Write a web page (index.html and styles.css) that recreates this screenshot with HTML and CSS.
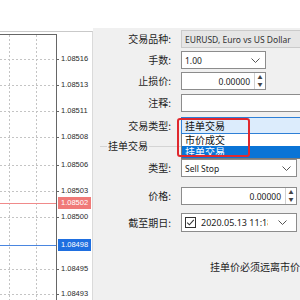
FILE: index.html
```html
<!DOCTYPE html>
<html lang="zh">

<head>
    <meta charset="UTF-8">
    <title>挂单交易</title>
    <link rel="stylesheet" href="styles.css">
</head>

<body>

    <div class="screen">
        <div class="top"></div>
        <div class="main">

            <div class="chart">
                <svg width="92" height="268" viewBox="0 0 92 268">
                    <g stroke="#c4c4c4" stroke-dasharray="2 2" stroke-width="1">
                        <line x1="9.5" y1="3" x2="9.5" y2="268" />
                        <line x1="36.5" y1="3" x2="36.5" y2="268" />
                        <line x1="0" y1="27.5" x2="56" y2="27.5" />
                        <line x1="0" y1="53.5" x2="56" y2="53.5" />
                        <line x1="0" y1="79.5" x2="56" y2="79.5" />
                        <line x1="0" y1="105.5" x2="56" y2="105.5" />
                        <line x1="0" y1="133.5" x2="56" y2="133.5" />
                        <line x1="0" y1="159.5" x2="56" y2="159.5" />
                        <line x1="0" y1="185.5" x2="56" y2="185.5" />
                        <line x1="0" y1="237.5" x2="56" y2="237.5" />
                        <line x1="0" y1="262.5" x2="56" y2="262.5" />
                    </g>
                    <line x1="0" y1="2.5" x2="57" y2="2.5" stroke="#666" />
                    <line x1="56.5" y1="2" x2="56.5" y2="268" stroke="#666" />
                    <line x1="0" y1="171.5" x2="56" y2="171.5" stroke="#f08a8a" />
                    <line x1="0" y1="213.5" x2="56" y2="213.5" stroke="#4a86e0" />
                    <g class="ticks" stroke="#666">
                        <line x1="57" y1="27.5" x2="59" y2="27.5" />
                        <line x1="57" y1="53.5" x2="59" y2="53.5" />
                        <line x1="57" y1="79.5" x2="59" y2="79.5" />
                        <line x1="57" y1="105.5" x2="59" y2="105.5" />
                        <line x1="57" y1="133.5" x2="59" y2="133.5" />
                        <line x1="57" y1="159.5" x2="59" y2="159.5" />
                        <line x1="57" y1="185.5" x2="59" y2="185.5" />
                        <line x1="57" y1="237.5" x2="59" y2="237.5" />
                        <line x1="57" y1="262.5" x2="59" y2="262.5" />
                    </g>
                    <g class="price">
                        <text x="61" y="27">1.08516</text>
                        <text x="61" y="53">1.08513</text>
                        <text x="61" y="79">1.08511</text>
                        <text x="61" y="105">1.08508</text>
                        <text x="61" y="133">1.08506</text>
                        <text x="61" y="159">1.08503</text>
                        <text x="61" y="185">1.08500</text>
                        <text x="61" y="237">1.08495</text>
                        <text x="61" y="262">1.08493</text>
                    </g>
                    <rect x="58" y="165" width="33" height="12" fill="#f07a78" />
                    <text class="price tag" x="61" y="171">1.08502</text>
                    <rect x="58" y="207" width="33" height="12" fill="#1f6fe0" />
                    <text class="price tag" x="61" y="213">1.08498</text>
                </svg>
            </div>

            <div class="dialog">
                <div class="row r1">
                    <span class="lbl">交易品种:</span>
                    <div class="field ro wide">EURUSD, Euro vs US Dollar</div>
                </div>
                <div class="row r2">
                    <span class="lbl">手数:</span>
                    <div class="field combo short">
                        <span class="val">1.00</span>
                        <svg class="chev" width="9" height="5" viewBox="0 0 9 5"><path d="M0.5 0.5 L4.5 4.5 L8.5 0.5" /></svg>
                    </div>
                </div>
                <div class="row r3">
                    <span class="lbl">止损价:</span>
                    <div class="field spin short">
                        <span class="num">0.00000</span>
                        <div class="arrows"><span>▲</span><span>▼</span></div>
                    </div>
                </div>
                <div class="row r4">
                    <span class="lbl">注释:</span>
                    <div class="field wide"></div>
                </div>
                <div class="row r5">
                    <span class="lbl">交易类型:</span>
                    <div class="select-wrap">
                        <div class="field open wide">挂单交易</div>
                        <ul class="options">
                            <li>市价成交</li>
                            <li class="sel">挂单交易</li>
                        </ul>
                    </div>
                </div>

                <div class="group-head">
                    <span class="stub"></span>
                    <span class="legend">挂单交易</span>
                    <span class="rule"></span>
                </div>

                <div class="row r6">
                    <span class="lbl">类型:</span>
                    <div class="field combo long">
                        <span class="val">Sell Stop</span>
                        <svg class="chev" width="9" height="5" viewBox="0 0 9 5"><path d="M0.5 0.5 L4.5 4.5 L8.5 0.5" /></svg>
                    </div>
                </div>
                <div class="row r7">
                    <span class="lbl">价格:</span>
                    <div class="field spin long">
                        <span class="num">0.00000</span>
                        <div class="arrows"><span>▲</span><span>▼</span></div>
                    </div>
                </div>
                <div class="row r8">
                    <span class="lbl">截至期日:</span>
                    <div class="field combo long date">
                        <svg class="check" width="11" height="11" viewBox="0 0 11 11">
                            <rect x="0.5" y="0.5" width="10" height="10" fill="#fff" stroke="#333" />
                            <path d="M2.2 5.6 L4.4 7.8 L8.8 2.8" fill="none" stroke="#333" stroke-width="1.1" />
                        </svg>
                        <span class="val clip">2020.05.13 11:18</span>
                        <svg class="chev" width="9" height="5" viewBox="0 0 9 5"><path d="M0.5 0.5 L4.5 4.5 L8.5 0.5" /></svg>
                    </div>
                </div>

                <p class="note">挂单价必须远离市价</p>

                <div class="mark"></div>
            </div>

        </div>
    </div>

</body>

</html>
```

FILE: styles.css
```css
* {
    margin: 0;
    padding: 0;
    box-sizing: border-box;
}

body {
    width: 300px;
    height: 300px;
    overflow: hidden;
    background: #fff;
    font-family: 'Noto Sans', 'Noto Sans CJK SC', sans-serif;
}

.screen {
    width: 300px;
    height: 300px;
    overflow: hidden;
    display: flex;
    flex-direction: column;
}

.top {
    height: 28px;
    flex: none;
    background: #fff;
}

.main {
    flex: 1;
    display: flex;
    min-height: 0;
}

.chart {
    width: 93px;
    flex: none;
    margin-top: 3px;
    border-top: 1px solid #c9c9c9;
    border-right: 1px solid #dadada;
    background: #fff;
}

.chart svg {
    display: block;
}

.price {
    font-family: 'Liberation Sans', sans-serif;
    font-size: 7.5px;
    fill: #2a2a2a;
    dominant-baseline: middle;
}

.price.tag {
    fill: #fff;
}

.dialog {
    flex: 1;
    position: relative;
    background: #f0f0f0;
    padding-top: 2px;
    display: flex;
    flex-direction: column;
    min-width: 0;
    overflow: visible;
}

.row {
    display: grid;
    grid-template-columns: 78px 1fr;
    column-gap: 10px;
    align-items: center;
    height: 18px;
}

.lbl {
    font-family: 'Noto Sans CJK SC', sans-serif;
    font-size: 10px;
    color: #1e1e1e;
    text-align: right;
    line-height: 12px;
    white-space: nowrap;
}

.r2 { margin-top: 3px; }
.r3 { margin-top: 3px; }
.r4 { margin-top: 4px; }
.r5 { margin-top: 5px; height: 16px; }
.r6 { margin-top: 7px; }
.r7 { margin-top: 10px; }
.r8 { margin-top: 8px; height: 19px; }

.field {
    height: 100%;
    background: #fff;
    border: 1px solid #8c8c8c;
    font-size: 8.5px;
    color: #222;
    display: flex;
    align-items: center;
    padding: 0 3px;
    white-space: nowrap;
    overflow: hidden;
}

.wide { width: 140px; }
.short { width: 85px; }
.long { width: 116px; }

.ro {
    background: #e6e6e6;
    border-color: #cacaca;
    color: #333;
}

.combo {
    justify-content: space-between;
}

.chev {
    flex: none;
    margin-right: 2px;
}

.chev path {
    fill: none;
    stroke: #555;
    stroke-width: 1;
}

.spin {
    padding: 0;
    justify-content: flex-end;
}

.num {
    padding-right: 4px;
}

.arrows {
    width: 11px;
    height: 100%;
    flex: none;
    border-left: 1px solid #d0d0d0;
    display: flex;
    flex-direction: column;
    justify-content: center;
    align-items: center;
    font-size: 5px;
    line-height: 7px;
    color: #444;
}

.date {
    justify-content: flex-start;
    gap: 5px;
    font-size: 9px;
}

.date .check {
    flex: none;
}

.date .clip {
    width: 67px;
    overflow: hidden;
}

.date .chev {
    margin-left: auto;
    margin-right: 6px;
}

.select-wrap {
    position: relative;
    height: 100%;
}

.open {
    background: #dcecfc;
    border-color: #2d7fd6;
    font-family: 'Noto Sans CJK SC', sans-serif;
    font-size: 10px;
    color: #111;
}

.options {
    position: absolute;
    top: 100%;
    left: 0;
    width: 140px;
    list-style: none;
    background: #fff;
    border: 1px solid #7a7a7a;
    border-top: none;
    z-index: 2;
}

.options li {
    height: 12px;
    line-height: 12px;
    padding: 0 3px;
    font-family: 'Noto Sans CJK SC', sans-serif;
    font-size: 10px;
    color: #111;
}

.options li.sel {
    background: #0a74d6;
    color: #fff;
}

.group-head {
    display: flex;
    align-items: center;
    height: 12px;
    margin-top: 7px;
    margin-left: 7px;
}

.stub {
    width: 7px;
    border-top: 1px solid #d4d4d4;
}

.legend {
    font-family: 'Noto Sans CJK SC', sans-serif;
    font-size: 10px;
    line-height: 12px;
    color: #1e1e1e;
    padding: 0 1px;
}

.rule {
    flex: 1;
    border-top: 1px solid #d4d4d4;
}

.note {
    margin-top: 29px;
    margin-left: 117px;
    font-family: 'Noto Sans CJK SC', sans-serif;
    font-size: 10px;
    line-height: 12px;
    color: #1e1e1e;
    white-space: nowrap;
}

.mark {
    position: absolute;
    left: 84px;
    top: 90px;
    width: 73px;
    height: 39px;
    border: 2px solid #e0282e;
    border-radius: 3px;
    z-index: 3;
}
```
